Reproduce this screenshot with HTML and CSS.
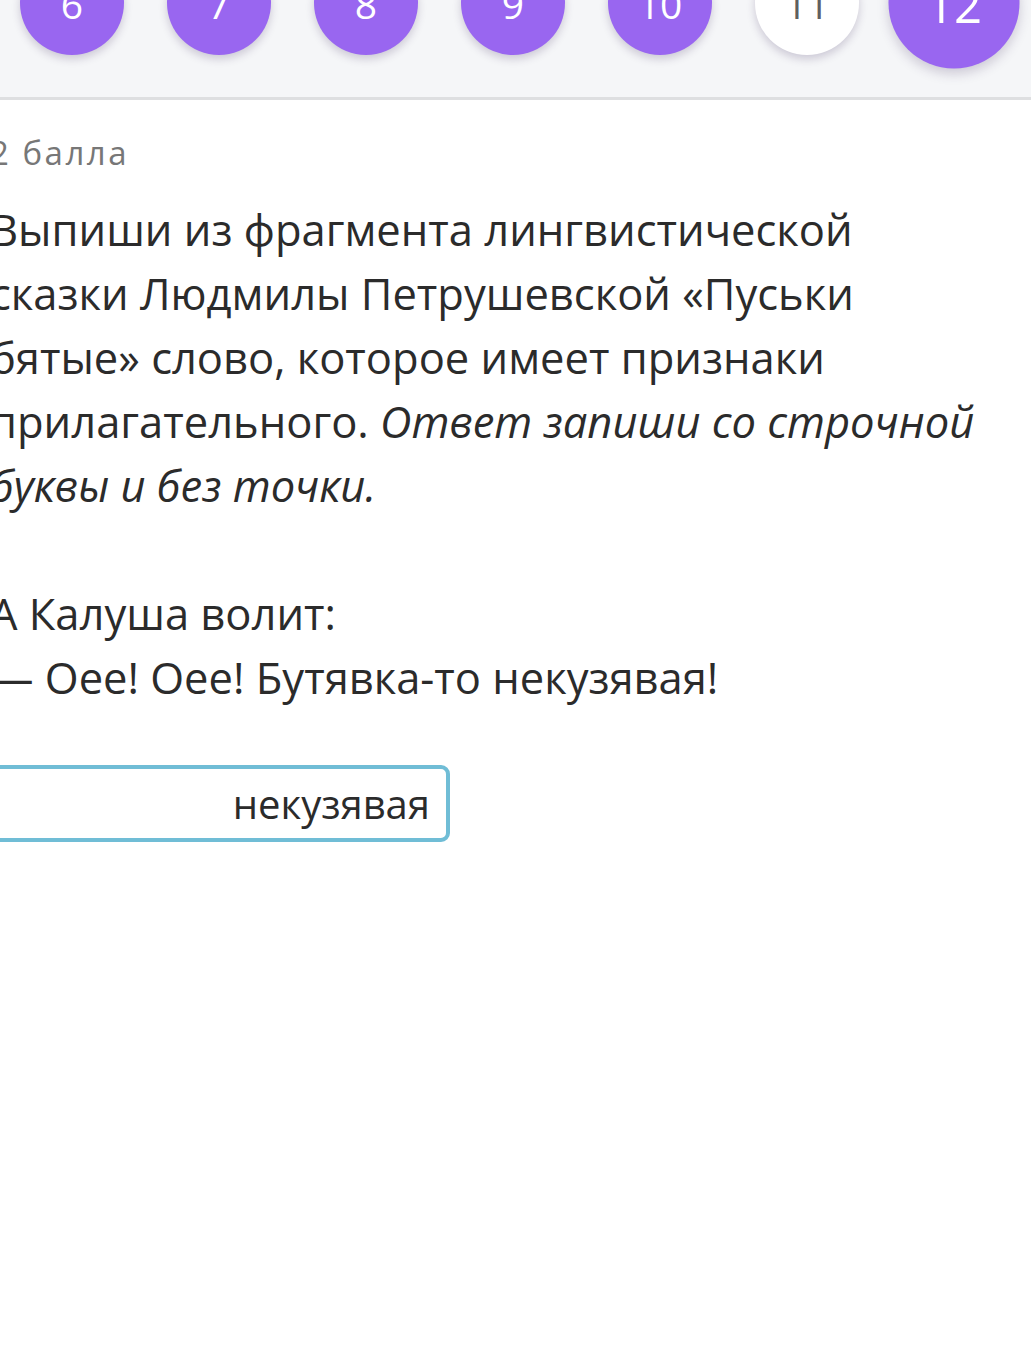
FILE: index.html
```html
<!DOCTYPE html>
<html lang="ru">
<head>
<meta charset="utf-8">
<title>Задание 11</title>
<link rel="stylesheet" href="styles.css">
</head>
<body>
<header class="nav">
  <div class="steps">
    <div class="step">6</div>
    <div class="step">7</div>
    <div class="step">8</div>
    <div class="step">9</div>
    <div class="step">10</div>
    <div class="step step-current">11</div>
    <div class="step step-big">12</div>
  </div>
</header>
<main class="task">
  <div class="points">2 балла</div>
  <div class="question">
    Выпиши из фрагмента лингвистической сказки Людмилы Петрушевской «Пуськи бятые» слово, которое имеет признаки прилагательного. <em>Ответ запиши со строчной буквы и без точки.</em><br><br>А Калуша волит:<br>— Оее! Оее! Бутявка-то некузявая!
  </div>
  <div class="answer">некузявая</div>
</main>
</body>
</html>
```
FILE: styles.css
```css
html, body {
  margin: 0;
  padding: 0;
  background: #ffffff;
  overflow: hidden;
  font-family: "Open Sans", "Noto Sans", sans-serif;
}

.nav {
  display: flow-root;
  height: 97px;
  background: #f5f6f8;
  border-bottom: 3px solid #dedfe1;
}

.steps {
  display: flex;
  align-items: center;
  gap: 43px;
  padding-left: 20px;
  margin-top: -49px;
}

.step {
  flex: 0 0 auto;
  width: 104px;
  height: 104px;
  border-radius: 50%;
  background: #9966f0;
  color: #ffffff;
  font-size: 39px;
  display: flex;
  align-items: center;
  justify-content: center;
  box-shadow: 0 4px 9px rgba(60, 40, 90, 0.22);
}

.step-current {
  background: #ffffff;
  color: #5f5f5f;
}

.step-big {
  transform: scale(1.26);
}

.task {
  margin-left: -10px;
  width: 988px;
  color: #2b2b2b;
}

.points {
  margin-top: 30px;
  font-size: 33px;
  letter-spacing: 2.5px;
  line-height: 46px;
  color: #777777;
}

.question {
  margin-top: 22px;
  font-size: 43.5px;
  line-height: 64px;
}

.question em {
  font-style: italic;
}

.answer {
  margin-top: 55px;
  width: 436px;
  height: 69px;
  box-sizing: content-box;
  border: 4px solid #70bdd6;
  border-radius: 9px;
  padding: 0 16px 0 0;
  font-size: 40px;
  display: flex;
  align-items: center;
  justify-content: flex-end;
  color: #2b2b2b;
}
```
